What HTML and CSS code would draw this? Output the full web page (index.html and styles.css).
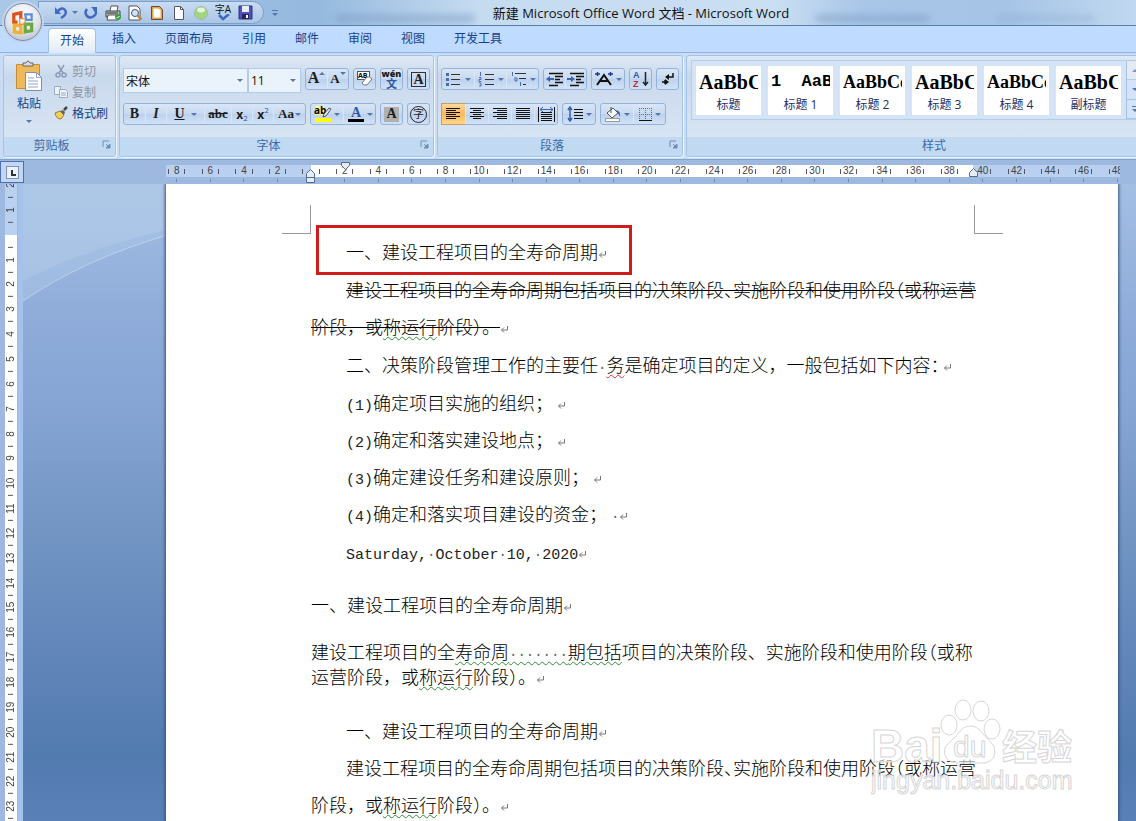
FILE: index.html
```html
<!DOCTYPE html>
<html lang="zh-CN">
<head>
    <meta charset="UTF-8">
    <title>新建 Microsoft Office Word 文档 - Microsoft Word</title>
    <link rel="stylesheet" href="styles.css">
</head>

<body>
<svg class="defs" aria-hidden="true">
    <symbol id="mark" viewBox="0 0 9 9"><path d="M7.5 1v4H1.5M4 2.5L1.5 5L4 7.5" fill="none" stroke="#777"/></symbol>
    <symbol id="launcher" viewBox="0 0 9 9"><path d="M1 7V1H7" fill="none" stroke="#6e8fb5"/><path d="M4 4l3 3M8 4v4H4z" fill="#6e8fb5" stroke="#6e8fb5"/></symbol>
</svg>

<div class="window">
    <header class="titlebar">
        <div class="quick">
            <button class="quick__btn" aria-label="撤销"><svg width="16" height="16" viewBox="0 0 16 16"><path d="M4 7Q9 1 12 5T8 13" fill="none" stroke="#4169c4" stroke-width="2.500"/><path d="M2 2v7h6z" fill="#4169c4"/></svg></button>
            <i class="caret quick__caret"></i>
            <button class="quick__btn" aria-label="重复"><svg width="16" height="16" viewBox="0 0 16 16"><path d="M4 4Q1 8 4 11T11 11T11 4" fill="none" stroke="#4169c4" stroke-width="2.500"/><path d="M8 2h6v6z" fill="#4169c4"/></svg></button>
            <button class="quick__btn" aria-label="快速打印"><svg width="17" height="16" viewBox="0 0 17 16"><path d="M5 6l1-5h7l-1 5" fill="#fff" stroke="#555"/><path d="M1 6h14v6H1z" fill="#b9bcc0" stroke="#444"/><path d="M3 10h10v5H2z" fill="#fff" stroke="#555"/><path d="M2 8h11" stroke="#333"/><circle cx="13" cy="12" r="3" fill="#37a13a"/><path d="M11.500 12l1 1 2-2" fill="none" stroke="#fff"/></svg></button>
            <button class="quick__btn" aria-label="打印预览"><svg width="16" height="16" viewBox="0 0 16 16"><path d="M2 1h8l3 3v11H2z" fill="#fff" stroke="#556"/><circle cx="8" cy="8" r="3.500" fill="#cfe4fa" stroke="#456"/><path d="M10.500 10.500l4 4" stroke="#b98a4a" stroke-width="2.500"/></svg></button>
            <button class="quick__btn" aria-label="页面"><svg width="14" height="16" viewBox="0 0 14 16"><path d="M1.500 1.500h8l3 3v10h-11z" fill="#e9a24c" stroke="#6a4a2a"/><path d="M3.500 3.500h5l2 2v7h-7z" fill="#fff"/></svg></button>
            <button class="quick__btn" aria-label="新建"><svg width="14" height="16" viewBox="0 0 14 16"><path d="M2.500 1.500h6l3 3v10h-9z" fill="#fff" stroke="#556"/><path d="M8.500 1.500v3h3" fill="none" stroke="#556"/></svg></button>
            <button class="quick__btn" aria-label="圆形"><svg width="16" height="16" viewBox="0 0 16 16"><circle cx="8" cy="8" r="6.500" fill="#9fd67f" stroke="#a9b4b4"/><ellipse cx="8" cy="5" rx="4" ry="2.500" fill="#e4f6d5"/></svg></button>
            <button class="quick__btn quick__spell" aria-label="拼写"><span>字A</span><svg width="14" height="8" viewBox="0 0 14 8"><path d="M3 1l4 4 6-5" fill="none" stroke="#3f69bd" stroke-width="2.500"/></svg></button>
            <button class="quick__btn" aria-label="保存"><svg width="15" height="15" viewBox="0 0 15 15"><path d="M1 1h13v13H1z" fill="#5350c0" stroke="#302f80"/><path d="M4 1h7v6H4z" fill="#e8eefa"/><path d="M4 9h7v5H4z" fill="#24245e"/><path d="M8 10h2v3H8z" fill="#fff"/></svg></button>
        </div>
        <button class="quick__more" aria-label="自定义"><i class="bar"></i><i class="caret"></i></button>
        <h1 class="title">新建 Microsoft Office Word 文档 - Microsoft Word</h1>
        <i class="haze haze--a"></i><i class="haze haze--b"></i><i class="haze haze--c"></i>
    </header>

    <button class="orb" aria-label="Office 按钮">
        <svg width="26" height="26" viewBox="0 0 24 24" fill="none" stroke-width="3">
            <path d="M10 9V3.500L3.500 5v7H7" stroke="#d9541e"/>
            <path d="M14 5h6v5h-5z" stroke="#5a8fd8" stroke-width="2"/>
            <path d="M4 15v6l6 1v-7z" stroke="#f1b12f"/>
            <path d="M14 14h6v6l-6 1z" stroke="#6aa842"/>
            <path d="M9 9h5v5H9z" stroke="#e8863a" stroke-width="1"/>
        </svg>
    </button>

    <nav class="tabs">
        <a href="#" class="tab tab--active">开始</a>
        <a href="#" class="tab">插入</a>
        <a href="#" class="tab">页面布局</a>
        <a href="#" class="tab">引用</a>
        <a href="#" class="tab">邮件</a>
        <a href="#" class="tab">审阅</a>
        <a href="#" class="tab">视图</a>
        <a href="#" class="tab">开发工具</a>
    </nav>

    <div class="ribbon">
        <section class="group">
            <div class="group__body clipboard">
                <button class="paste">
                    <svg width="28" height="32" viewBox="0 0 28 32">
                        <path d="M1.500 4.500h23v24h-23z" fill="#edb95c" stroke="#c78d35"/>
                        <path d="M8 6V3h3q2-4 4 0h3v3z" fill="#d9dce2" stroke="#666"/>
                        <path d="M10.500 12.500h11l5 5v13h-16z" fill="#fff" stroke="#7b8fb3"/>
                        <path d="M21.500 12.500v5h5M13 18h6M13 21h10M13 24h10M13 27h10" fill="none" stroke="#93a6cb"/>
                    </svg>
                    <span>粘贴</span>
                    <i class="caret"></i>
                </button>
                <div class="clipboard__list">
                    <button class="clip clip--off"><svg width="14" height="14" viewBox="0 0 14 14"><path d="M4 1l5 8M10 1L5 9" stroke="#8a9bb3" stroke-width="1.500"/><circle cx="4" cy="11" r="2" fill="none" stroke="#8a9bb3" stroke-width="1.500"/><circle cx="10" cy="11" r="2" fill="none" stroke="#8a9bb3" stroke-width="1.500"/></svg>剪切</button>
                    <button class="clip clip--off"><svg width="14" height="14" viewBox="0 0 14 14"><path d="M.5 1.500h6v8h-6z" fill="#eef3fa" stroke="#9aabc4"/><path d="M5.500 4.500h6l2 2v6h-8zM7 8h5M7 10h5" fill="#eef3fa" stroke="#9aabc4"/></svg>复制</button>
                    <button class="clip"><svg width="14" height="14" viewBox="0 0 14 14"><path d="M1 7l5-2 4 4-3 4q-5 0-6-6z" fill="#f0cf5e" stroke="#a87b28"/><path d="M6 5l4 4 1-3-2-2z" fill="#666"/><path d="M10 4l3-3" stroke="#444" stroke-width="2.500"/></svg>格式刷</button>
                </div>
            </div>
            <footer class="group__label">剪贴板<svg class="launcher"><use href="#launcher"/></svg></footer>
        </section>

        <section class="group">
            <div class="group__body tools">
                <div class="row">
                    <div class="combos">
                        <label class="combo combo--font"><input type="text" value="宋体" aria-label="字体"><i class="caret"></i></label>
                        <label class="combo combo--size"><input type="text" value="11" aria-label="字号"><i class="caret"></i></label>
                    </div>
                    <div class="set">
                        <button class="tool serif grow">A<i class="up"></i></button>
                        <button class="tool serif shrink">A<i class="caret"></i></button>
                    </div>
                    <div class="set"><button class="tool" aria-label="清除格式"><svg width="18" height="18" viewBox="0 0 18 18"><rect x="1.500" y="1.500" width="12" height="8" fill="#fff" stroke="#555"/><text x="2" y="8" class="tiny">AB</text><path d="M6 13l5-6q3-1 5 2l-5 6q-4 1-5-2z" fill="#fff" stroke="#777"/></svg></button></div>
                    <div class="set"><button class="tool wen"><b>wén</b><span>文</span></button></div>
                    <div class="set"><button class="tool serif"><span class="boxed">A</span></button></div>
                </div>
                <div class="row">
                    <div class="set">
                        <button class="tool serif">B</button>
                        <button class="tool serif"><i>I</i></button>
                        <button class="tool tool--u serif"><u>U</u><i class="caret"></i></button>
                        <button class="tool tool--abc serif"><s>abc</s></button>
                        <button class="tool">x<sub>2</sub></button>
                        <button class="tool">x<sup>2</sup></button>
                        <button class="tool tool--case serif">Aa<i class="caret"></i></button>
                    </div>
                    <div class="set">
                        <button class="tool tool--wide" aria-label="突出显示"><svg width="18" height="18" viewBox="0 0 18 18"><path d="M1 13h16v4H1z" fill="#ffff00"/><path d="M1 1h9v9H1z" fill="#fff68a"/><text x="0" y="9" class="ab">ab</text><path d="M9 12l1-3 5-6 2 1-5 7z" fill="#dce8fa" stroke="#556"/></svg><i class="caret"></i></button>
                        <button class="tool tool--wide" aria-label="字体颜色"><svg width="18" height="18" viewBox="0 0 18 18"><path d="M1 14h16v3H1z" fill="#000"/><text x="4" y="12" class="cap">A</text></svg><i class="caret"></i></button>
                    </div>
                    <div class="set"><button class="tool serif"><span class="shaded">A</span></button></div>
                    <div class="set"><button class="tool"><span class="ring">字</span></button></div>
                </div>
            </div>
            <footer class="group__label">字体<svg class="launcher"><use href="#launcher"/></svg></footer>
        </section>

        <section class="group">
            <div class="group__body tools">
                <div class="row">
                    <div class="set">
                        <button class="tool tool--wide" aria-label="项目符号"><svg width="18" height="16" viewBox="0 0 18 16"><path d="M6 3.500h9M6 8.500h9M6 13.500h9" stroke="#333"/><path d="M1 2h3v3H1zM1 7h3v3H1zM1 12h3v3H1z" fill="#4a6ea9"/></svg><i class="caret"></i></button>
                        <button class="tool tool--wide" aria-label="编号"><svg width="18" height="16" viewBox="0 0 18 16"><path d="M7 3.500h9M7 8.500h9M7 13.500h9" stroke="#333"/><path d="M2.500 1v4M1 6.500h2v2H1v2h2M1 12h2v3H1" fill="none" stroke="#4a6ea9"/></svg><i class="caret"></i></button>
                        <button class="tool tool--wide" aria-label="多级列表"><svg width="18" height="16" viewBox="0 0 18 16"><path d="M5 2.500h11M9 7.500h7M13 13.500h3" stroke="#333"/><path d="M2.500 1v4M4 7h3v3H5V8M10.500 11v4" fill="none" stroke="#4a6ea9"/></svg><i class="caret"></i></button>
                    </div>
                    <div class="set">
                        <button class="tool" aria-label="减少缩进"><svg width="18" height="16" viewBox="0 0 18 16"><path d="M3 2.500h14M9 5.500h8M9 8.500h5M9 11.500h8M3 14.500h9" stroke="#111" stroke-width="1.500"/><path d="M0 8l4-3v2h4v2H4v2z" fill="#3c62ae"/></svg></button>
                        <button class="tool" aria-label="增加缩进"><svg width="18" height="16" viewBox="0 0 18 16"><path d="M3 2.500h14M9 5.500h8M9 8.500h5M9 11.500h8M3 14.500h9" stroke="#111" stroke-width="1.500"/><path d="M8 8L4 5v2H0v2h4v2z" fill="#3c62ae"/></svg></button>
                    </div>
                    <div class="set"><button class="tool tool--wide" aria-label="中文版式"><svg width="20" height="16" viewBox="0 0 20 16"><path d="M3 14L10 4l7 10M6 10h8" fill="none" stroke="#111" stroke-width="2"/><path d="M1 3h5M3.500 1v4M14 3h5M16.500 1v4" stroke="#22349c" stroke-width="1.500"/></svg><i class="caret"></i></button></div>
                    <div class="set"><button class="tool" aria-label="排序"><svg width="18" height="18" viewBox="0 0 18 18"><text x="1" y="8" class="sort sort--a">A</text><text x="1" y="17" class="sort sort--z">Z</text><path d="M13.500 2v12M11 12l2.500 3 2.500-3" fill="none" stroke="#222" stroke-width="1.500"/></svg></button></div>
                    <div class="set"><button class="tool" aria-label="显示标记"><svg width="16" height="16" viewBox="0 0 16 16"><path d="M13 2v4H7M5 9v4M2 11h6" fill="none" stroke="#111" stroke-width="1.500"/><path d="M9 3v6L5 6zM5 8l4 3-4 3z" fill="#111"/></svg></button></div>
                </div>
                <div class="row">
                    <div class="set set--align">
                        <button class="tool tool--on" aria-label="左对齐"><svg width="15" height="14" viewBox="0 0 15 14"><path d="M0 1.500h14M0 3.500h10M0 5.500h14M0 7.500h10M0 9.500h14M0 11.500h10" stroke="#111"/></svg></button>
                        <button class="tool" aria-label="居中"><svg width="15" height="14" viewBox="0 0 15 14"><path d="M0 1.500h14M3 3.500h8M0 5.500h14M3 7.500h8M0 9.500h14M3 11.500h8" stroke="#111"/></svg></button>
                        <button class="tool" aria-label="右对齐"><svg width="15" height="14" viewBox="0 0 15 14"><path d="M0 1.500h14M4 3.500h10M0 5.500h14M4 7.500h10M0 9.500h14M4 11.500h10" stroke="#111"/></svg></button>
                        <button class="tool" aria-label="两端对齐"><svg width="15" height="14" viewBox="0 0 15 14"><path d="M0 1.500h14M0 3.500h14M0 5.500h14M0 7.500h14M0 9.500h14M0 11.500h14" stroke="#111"/></svg></button>
                        <button class="tool" aria-label="分散对齐"><svg width="17" height="17" viewBox="0 0 17 17"><path d="M3 6.500h11M3 8.500h11M3 10.500h11M3 12.500h11M3 14.500h11M.5 1v15M16.500 1v15" stroke="#111"/><path d="M2 3.500h13M5 1L2 3.500 5 6M12 1l3 2.500L12 6" fill="none" stroke="#3c62ae"/></svg></button>
                    </div>
                    <div class="set"><button class="tool tool--wide" aria-label="行距"><svg width="17" height="16" viewBox="0 0 17 16"><path d="M7 3.500h9M7 6.500h9M7 9.500h9M7 12.500h9" stroke="#111"/><path d="M3 1v14M1 4l2-3 2 3M1 12l2 3 2-3" fill="none" stroke="#3c62ae" stroke-width="1.500"/></svg><i class="caret"></i></button></div>
                    <div class="set">
                        <button class="tool tool--wide" aria-label="底纹"><svg width="18" height="17" viewBox="0 0 18 17"><path d="M3 7l6-5 5 5-6 5z" fill="#f4f7fb" stroke="#555"/><path d="M7 1v6" stroke="#555"/><path d="M12 4q5 1 4 7l-2-4z" fill="#3c62ae"/><path d="M1.500 12.500h14v3h-14z" fill="#fff" stroke="#999"/></svg><i class="caret"></i></button>
                        <button class="tool tool--wide" aria-label="边框"><svg width="15" height="15" viewBox="0 0 15 15"><path d="M1.500 1v12M7.500 1v12M13.500 1v12M1 1.500h13M1 7.500h13" stroke="#667" stroke-dasharray="1 1"/><path d="M1 13.500h13" stroke="#111" stroke-width="1"/></svg><i class="caret"></i></button>
                    </div>
                </div>
            </div>
            <footer class="group__label">段落<svg class="launcher"><use href="#launcher"/></svg></footer>
        </section>

        <section class="group group--styles">
            <div class="group__body">
                <div class="gallery">
                    <div class="gallery__items">
                        <button class="style"><b>AaBbCc</b><span>标题</span></button>
                        <button class="style"><b class="style__mono">1&nbsp; AaBb</b><span>标题 1</span></button>
                        <button class="style"><b class="style__small">AaBbCc</b><span>标题 2</span></button>
                        <button class="style"><b>AaBbCc</b><span>标题 3</span></button>
                        <button class="style"><b class="style__small">AaBbCc</b><span>标题 4</span></button>
                        <button class="style"><b>AaBbCc</b><span>副标题</span></button>
                    </div>
                    <div class="gallery__scroll">
                        <button class="gallery__off" aria-label="上一行"><i class="up"></i></button>
                        <button aria-label="下一行"><i class="caret"></i></button>
                        <button aria-label="更多"><i class="bar"></i><i class="caret"></i></button>
                    </div>
                </div>
            </div>
            <footer class="group__label">样式</footer>
        </section>
    </div>

    <div class="ruler">
        <button class="corner" aria-label="制表符"><span></span></button>
        <div class="ruler__track">
            <div class="ruler__white"></div>
            <div class="ruler__cells">
                <span>8</span><span>6</span><span>4</span><span>2</span><span></span><span>2</span><span>4</span><span>6</span><span>8</span><span>10</span><span>12</span><span>14</span><span>16</span><span>18</span><span>20</span><span>22</span><span>24</span><span>26</span><span>28</span><span>30</span><span>32</span><span>34</span><span>36</span><span>38</span><span>40</span><span>42</span><span>44</span><span>46</span><span>48</span>
            </div>
            <svg class="stop stop--left" width="9" height="14" viewBox="0 0 9 14"><path d="M.5 8.500v-4l4-4 4 4v4zM.5 8.500h8v5h-8z" fill="#e6ecf5" stroke="#556c8e"/></svg>
            <svg class="stop stop--first" width="9" height="8" viewBox="0 0 9 8"><path d="M.5.5h8v3l-4 4-4-4z" fill="#e6ecf5" stroke="#556c8e"/></svg>
            <svg class="stop stop--right" width="9" height="9" viewBox="0 0 9 9"><path d="M.5 8.500v-4l4-4 4 4v4z" fill="#e6ecf5" stroke="#556c8e"/></svg>
        </div>
    </div>

    <main class="workspace">
        <div class="vruler">
            <div class="vruler__cells">
                <span>2</span><span>1</span><span></span><span>1</span><span>2</span><span>3</span><span>4</span><span>5</span><span>6</span><span>7</span><span>8</span><span>9</span><span>10</span><span>11</span><span>12</span><span>13</span><span>14</span><span>15</span><span>16</span><span>17</span><span>18</span><span>19</span><span>20</span><span>21</span><span>22</span><span>23</span><span>24</span>
            </div>
        </div>
        <div class="desk">
            <svg class="wave" viewBox="0 0 144 160" preserveAspectRatio="none">
                <path d="M0 0h144v46Q60 66 0 97z" fill="#b3cdea" opacity=".65"/>
                <path d="M0 97Q60 66 144 46v6Q60 76 0 117z" fill="#a9c4e6" opacity=".55"/>
                <path d="M0 117Q60 76 144 51" fill="none" stroke="#b9d0ee" stroke-width="1"/>
            </svg>
            <article class="page">
                <i class="crop crop--left"></i><i class="crop crop--right"></i>
                <div class="callout"></div>

                <p class="para para--indent">一、建设工程项目的全寿命周期<svg class="mark"><use href="#mark"/></svg></p>
                <p class="para para--indent"><s>建设工程项目的全寿命周期包括项目的决策阶段<span class="half">、</span>实施阶段和使用阶段<span class="half">（</span>或称运营<br>阶段，或<span class="wavy">称运行</span>阶段<span class="half">）</span>。</s><svg class="mark"><use href="#mark"/></svg></p>
                <p class="para para--indent">二、决策阶段管理工作的主要任<span class="dot">·</span><span class="wavy wavy--red">务</span>是确定项目的定义，一般包括如下内容<span class="half">：</span> <svg class="mark"><use href="#mark"/></svg></p>
                <div class="list">
                    <p><span class="latin">(1)</span>确定项目实施的组织； <svg class="mark"><use href="#mark"/></svg></p>
                    <p><span class="latin">(2)</span>确定和落实建设地点； <svg class="mark"><use href="#mark"/></svg></p>
                    <p><span class="latin">(3)</span>确定建设任务和建设原则； <svg class="mark"><use href="#mark"/></svg></p>
                    <p><span class="latin">(4)</span>确定和落实项目建设的资金； <span class="dot">·</span><svg class="mark"><use href="#mark"/></svg></p>
                </div>
                <p class="para para--indent"><span class="latin">Saturday,<span class="dot">·</span>October<span class="dot">·</span>10,<span class="dot">·</span>2020</span><svg class="mark"><use href="#mark"/></svg></p>

                <p class="para para--tight">一、建设工程项目的全寿命周期<svg class="mark"><use href="#mark"/></svg></p>
                <p class="para para--tight">建设工程项目的全<span class="wavy">寿命周<span class="dot">·······</span>期包括</span>项目的决策阶段、实施阶段和使用阶段<span class="half">（</span>或称<br>运营阶段，或<span class="wavy">称运行</span>阶段）。<svg class="mark"><use href="#mark"/></svg></p>

                <p class="para para--indent para--after">一、建设工程项目的全寿命周期<svg class="mark"><use href="#mark"/></svg></p>
                <p class="para para--indent">建设工程项目的全寿命周期包括项目的决策阶段<span class="half">、</span>实施阶段和使用阶段<span class="half">（</span>或称运营<br>阶段，或<span class="wavy">称运行</span>阶段<span class="half">）</span>。<svg class="mark"><use href="#mark"/></svg></p>

                <svg class="watermark" width="208" height="108" viewBox="0 0 208 108">
                    <g fill="#fff" fill-opacity=".6" stroke="#d6d6d6" stroke-width="1">
                        <text x="0" y="70" class="wm wm--bai">Bai</text>
                        <ellipse cx="78" cy="33" rx="8" ry="10"/>
                        <ellipse cx="92" cy="18" rx="8" ry="10"/>
                        <ellipse cx="110" cy="19" rx="8" ry="10"/>
                        <ellipse cx="121" cy="37" rx="8" ry="10"/>
                        <path d="M99 34q8 0 13 8l11 12q4 14-9 17H85q-14-2-11-16l13-13q5-8 12-8z"/>
                        <text x="82" y="65" class="wm wm--du">du</text>
                        <text x="131" y="68" class="wm wm--cn">经验</text>
                        <text x="0" y="97" class="wm wm--url">jingyan.baidu.com</text>
                    </g>
                </svg>
            </article>
        </div>
    </main>
</div>
</body>
</html>
```
FILE: styles.css
```css
* {
    box-sizing: border-box;
}

html, body {
    margin: 0;
    padding: 0;
    height: 100%;
    overflow: hidden;
}

body {
    font-family: "Open Sans", "Noto Sans CJK SC", sans-serif;
    font-size: 12px;
    color: #15428b;
}

button {
    margin: 0;
    padding: 0;
    border: 0;
    background: none;
    font: inherit;
    color: inherit;
}

.defs {
    position: absolute;
    width: 0;
    height: 0;
}

.window {
    position: relative;
    display: flex;
    flex-direction: column;
    height: 100vh;
    background: #9db9e0;
}

.caret, .up {
    flex: none;
    border: 3px solid transparent;
    border-top-color: #5577aa;
    border-bottom: 0;
}

.up {
    border-top: 0;
    border-bottom: 3px solid #5577aa;
}

.bar {
    width: 6px;
    height: 1px;
    background: #5577aa;
}

/* title bar */
.titlebar {
    position: relative;
    display: flex;
    align-items: center;
    flex: none;
    height: 26px;
    padding-left: 38px;
    border-bottom: 1px solid #5b7ea8;
    background: linear-gradient(90deg, #a9c8e6, #95b9df 28%, #c5dbf0 42%, #cbdff3 68%, #a8c6e8 76%, #a5c4e6 88%, #c0d8f0);
    overflow: hidden;
}

.quick {
    display: flex;
    align-items: center;
    width: 226px;
    height: 23px;
    padding-left: 11px;
    border: 1px solid #7e9cc4;
    border-radius: 0 12px 12px 0;
    background: linear-gradient(#c8dcf2, #aac6e6);
}

.quick__btn {
    display: flex;
    justify-content: center;
    align-items: center;
    width: 22px;
    height: 20px;
}

.quick__caret {
    margin: 0 2px 0 0;
}

.quick__spell {
    flex-direction: column;
    font-size: 10px;
    line-height: 10px;
    color: #111;
}

.quick__more {
    display: flex;
    flex-direction: column;
    align-items: center;
    gap: 2px;
    margin-left: 8px;
}

.title {
    position: absolute;
    left: 0;
    right: 0;
    margin: 0;
    padding-left: 146px;
    text-align: center;
    font-size: 13px;
    line-height: 26px;
    font-weight: normal;
    color: #111;
}

.haze {
    position: absolute;
    top: 14px;
    height: 9px;
    border-radius: 5px;
    background: #7f9fc4;
    opacity: 0.5;
    filter: blur(3px);
}

.haze--a {
    left: 335px;
    width: 140px;
}

.haze--b {
    left: 815px;
    width: 115px;
}

.haze--c {
    right: 40px;
    width: 100px;
    opacity: 0.25;
}

.orb {
    position: absolute;
    top: 3px;
    left: 4px;
    z-index: 2;
    display: flex;
    justify-content: center;
    align-items: center;
    width: 38px;
    height: 38px;
    border: 1px solid #7d8da6;
    border-radius: 50%;
    background: radial-gradient(circle at 50% 30%, #fff, #dfe3ea 55%, #aab4c4);
    box-shadow: 0 0 0 2px #c3d5ec;
}

/* tabs */
.tabs {
    display: flex;
    align-items: flex-end;
    gap: 1px;
    flex: none;
    height: 27px;
    padding-left: 48px;
    background: #bfdbff;
    border-bottom: 1px solid #8db2e3;
}

.tab {
    height: 25px;
    padding: 0 14px;
    line-height: 24px;
    color: #15428b;
    text-decoration: none;
}

.tab--active {
    margin: 0 1px -1px 0;
    border: 1px solid #9fc0ea;
    border-bottom: 0;
    border-radius: 4px 4px 0 0;
    padding: 0 11px;
    background: linear-gradient(#fff, #e0ebf8);
}

/* ribbon */
.ribbon {
    display: flex;
    gap: 3px;
    flex: none;
    padding: 2px 3px;
    background: #c9dcf3;
    border-bottom: 1px solid #7fa5cb;
    overflow: hidden;
}

.group {
    display: flex;
    flex-direction: column;
    flex: none;
    border: 1px solid #a6c5e6;
    border-radius: 3px;
    background: linear-gradient(#dfe9f5, #c9d9ed 20%, #dce8f5);
    box-shadow: 1px 1px 0 #eef6ff;
    overflow: hidden;
}

.group--styles {
    width: 496px;
}

.group__body {
    height: 81px;
}

.group__label {
    position: relative;
    height: 19px;
    line-height: 18px;
    background: #c1d9f1;
    text-align: center;
    color: #3e6aaa;
}

.group:first-child .group__label, .group:nth-child(2) .group__label, .group:nth-child(3) .group__label {
    padding-right: 16px;
}

.launcher {
    position: absolute;
    right: 4px;
    top: 3px;
    width: 9px;
    height: 9px;
}

.clipboard {
    display: flex;
    width: 111px;
    padding: 4px 0 0 2px;
}

.paste {
    display: flex;
    flex-direction: column;
    align-items: center;
    width: 46px;
}

.paste span {
    line-height: 24px;
}

.paste .caret {
    margin-top: 4px;
}

.clipboard__list {
    display: flex;
    flex-direction: column;
}

.clip {
    display: flex;
    align-items: center;
    gap: 4px;
    height: 21px;
    margin-left: 2px;
    white-space: nowrap;
}

.clip--off {
    color: #8f959e;
}

.tools {
    display: flex;
    flex-direction: column;
    gap: 10px;
    padding: 12px 3px 0;
}

.row {
    display: flex;
    align-items: flex-start;
    gap: 4px;
    height: 25px;
}

.row:last-child {
    height: 22px;
}

.combos {
    display: flex;
}

.combo {
    display: flex;
    align-items: center;
    height: 25px;
    padding-right: 4px;
    border: 1px solid #b0cbec;
    background: #eaf2fb;
}

.combo--font {
    width: 125px;
}

.combo--size {
    width: 53px;
}

.combo input {
    flex: 1;
    min-width: 0;
    padding: 0 2px;
    border: 0;
    outline: 0;
    background: none;
    font: inherit;
    color: #111;
}

.set {
    display: flex;
    height: 22px;
    border: 1px solid #93b3dc;
    border-radius: 3px;
    background: linear-gradient(#d9e6f6, #c7d9f0 50%, #bcd1ee 51%, #d2e2f6);
}

.tool {
    display: flex;
    justify-content: center;
    align-items: center;
    gap: 2px;
    width: 21px;
    height: 20px;
    font-weight: bold;
    color: #1c1c1c;
}

.tool + .tool {
    border-left: 1px solid #d9e6f7;
}

.tool svg {
    flex: none;
}

.tool--wide {
    width: 32px;
}

.set--align .tool {
    width: 23px;
}

.tool--u {
    width: 38px;
    gap: 6px;
}

.tool--abc {
    width: 27px;
}

.tool--case {
    width: 32px;
    gap: 1px;
}

.tool--on {
    background: linear-gradient(#fbd9a0, #f9b65c 50%, #fdd98c);
    box-shadow: 0 0 0 1px #c2a066;
}

.serif {
    font-family: "Liberation Serif", serif;
    font-size: 14px;
}

.tool--abc, .tool--case {
    font-size: 13px;
}

.tool sub, .tool sup {
    margin-left: -2px;
    font-size: 8px;
    line-height: 8px;
    font-weight: normal;
    color: #2f57a8;
}

.tool sub {
    margin-top: 8px;
}

.tool sup {
    margin-top: -8px;
}

.grow {
    align-items: flex-start;
    gap: 0;
    font-size: 16px;
}

.shrink {
    align-items: flex-start;
    gap: 0;
    line-height: 20px;
    font-size: 13px;
}

.grow .up, .shrink .caret {
    margin-top: 3px;
}

.wen {
    flex-direction: column;
    gap: 0;
    font-size: 9px;
    line-height: 8px;
}

.wen span {
    font-size: 11px;
    line-height: 11px;
    color: #2f57a8;
}

.boxed, .shaded {
    width: 15px;
    height: 15px;
    border: 1px solid #333;
    line-height: 14px;
}

.shaded {
    border: 0;
    background: #b0b0b0;
}

.ring {
    width: 17px;
    height: 17px;
    border: 1px solid #222;
    border-radius: 50%;
    font-size: 11px;
    line-height: 14px;
    font-weight: normal;
}

.tiny {
    font: bold 7px "Open Sans", sans-serif;
}

.ab {
    font: bold 10px "Open Sans", sans-serif;
}

.cap {
    font: bold 14px "Liberation Serif", serif;
    fill: #2f57a8;
}

.sort {
    font: bold 9px "Liberation Sans", sans-serif;
}

.sort--a {
    fill: #2f57a8;
}

.sort--z {
    fill: #b03030;
}

.gallery {
    display: flex;
    margin: 4px;
    height: 60px;
    border: 1px solid #b5cdea;
    background: #d5e3f6;
    overflow: hidden;
}

.gallery__items {
    display: flex;
    gap: 7px;
    flex: none;
    padding: 5px 5px 0 4px;
}

.style {
    width: 65px;
    height: 49px;
    padding: 4px 3px 0;
    background: #fff;
    text-align: center;
}

.style b {
    display: block;
    overflow: hidden;
    white-space: nowrap;
    text-align: left;
    font-family: "Liberation Serif", serif;
    font-size: 20px;
    line-height: 24px;
    color: #000;
}

.style .style__small {
    font-size: 18px;
}

.style .style__mono {
    font-family: "Liberation Mono", monospace;
    font-size: 17px;
}

.style span {
    line-height: 22px;
    color: #1e2f66;
}

.gallery__scroll {
    display: flex;
    flex-direction: column;
    width: 16px;
    border-left: 1px solid #a6c3e6;
}

.gallery__scroll button {
    display: flex;
    flex-direction: column;
    justify-content: center;
    align-items: center;
    gap: 2px;
    flex: 1;
    border-bottom: 1px solid #a6c3e6;
}

.gallery__off {
    background: #eceef1;
    opacity: 0.7;
}

/* horizontal ruler */
.ruler {
    display: flex;
    flex: none;
    height: 24px;
    padding-top: 1px;
}

.corner {
    display: flex;
    justify-content: center;
    align-items: center;
    width: 24px;
    height: 22px;
    border: 1px solid #4c6fb1;
    background: #c4d7f2;
}

.corner span {
    width: 13px;
    height: 13px;
    border: 1px solid #7b94bd;
    background: linear-gradient(#333, #333) 4px 3px / 2px 6px no-repeat, linear-gradient(#333, #333) 4px 7px / 5px 2px no-repeat, #edf3fc;
}

.ruler__track {
    position: relative;
    flex: none;
    width: 954px;
    height: 18px;
    margin: 4px 0 0 142px;
    background: linear-gradient(#b9d0f0, #b9d0f0) 0 0 / 100% 12px no-repeat;
}

.ruler__white {
    width: 662px;
    height: 12px;
    margin-left: 145px;
    background: #fff;
}

.ruler__cells {
    position: absolute;
    inset: 0;
    display: grid;
    grid-template-columns: repeat(29, 1fr);
    margin: 0 -14px 0 -6px;
    clip-path: inset(0 14px 0 6px);
}

.ruler__cells span {
    background: linear-gradient(#556, #556) 25% 4px / 1px 5px no-repeat, linear-gradient(#556, #556) 75% 4px / 1px 5px no-repeat, linear-gradient(#7288a8, #7288a8) 50% 14px / 1px 3px no-repeat;
    text-align: center;
    font: 10px/12px "Liberation Sans", sans-serif;
    color: #444;
}

.stop {
    position: absolute;
}

.stop--left {
    left: 140px;
    top: 4px;
}

.stop--first {
    left: 175px;
    top: -3px;
}

.stop--right {
    left: 803px;
    top: 3px;
}

/* document area */
.workspace {
    display: flex;
    flex: 1;
    min-height: 0;
}

.vruler {
    flex: none;
    width: 23px;
    padding-left: 5px;
    border-right: 5px solid #a4c2ea;
    background: #9db9e0;
    overflow: hidden;
}

.vruler__cells {
    display: grid;
    grid-template-rows: repeat(27, 1fr);
    height: 671px;
    margin-top: -11px;
    width: 12px;
    background: linear-gradient(#b9d0f0 62px, #fff 62px);
}

.vruler__cells span {
    background: linear-gradient(#556, #556) 4px 0 / 5px 1px no-repeat;
    writing-mode: vertical-rl;
    transform: rotate(180deg);
    text-align: center;
    font: 10px/12px "Liberation Sans", sans-serif;
    color: #444;
}

.desk {
    position: relative;
    flex: 1;
    min-width: 0;
    background: linear-gradient(#a3bfe4, #8eabd9 22%, #86a5d4 35%, #6d91c0 60%, #6387bb 72%, #527bb0 90%, #5a80b8);
    overflow: hidden;
}

.wave {
    position: absolute;
    left: 0;
    top: 0;
    width: 144px;
    height: 160px;
}

.page {
    position: relative;
    width: 952px;
    min-height: 100%;
    margin-left: 143px;
    padding: 49px 140px 0 145px;
    background: #fff;
    box-shadow: 0 0 3px 1px #34507c;
    font-family: "Noto Sans CJK SC", sans-serif;
    font-weight: 300;
    font-size: 18px;
    line-height: 37px;
    color: #000;
    white-space: nowrap;
}

.crop {
    position: absolute;
    top: 21px;
    width: 29px;
    height: 29px;
    border-bottom: 1px solid #999;
}

.crop--left {
    left: 116px;
    border-right: 1px solid #999;
}

.crop--right {
    left: 808px;
    border-left: 1px solid #999;
}

.callout {
    position: absolute;
    left: 150px;
    top: 41px;
    width: 316px;
    height: 50px;
    border: 3px solid #d01c1c;
}

.page p {
    margin: 0;
}

.page .para {
    margin-bottom: 1px;
}

.para--indent {
    text-indent: 35px;
}

.list {
    margin-bottom: 1px;
    padding-left: 35px;
}

.page .para--tight {
    margin: 22px 0;
    line-height: 25px;
}

.page .para--after {
    margin: 23px 0 0;
}

.latin {
    font-family: "Liberation Mono", monospace;
    font-size: 15px;
    line-height: 1;
    color: #222;
}

.dot {
    font-family: "Liberation Mono", monospace;
    font-size: 14px;
    line-height: 1;
    color: #666;
}

.half {
    font-feature-settings: "halt";
}

.page s {
    text-decoration-thickness: 1px;
}

.wavy {
    text-decoration: underline wavy #2e8b3a 1px;
    text-underline-offset: 2px;
}

.wavy--red {
    text-decoration-color: #d03030;
}

.mark {
    width: 9px;
    height: 9px;
}

.watermark {
    position: absolute;
    left: 705px;
    top: 508px;
}

.wm {
    font-family: "Liberation Sans", "Noto Sans CJK SC", sans-serif;
}

.wm--bai {
    font-size: 46px;
    font-weight: bold;
}

.wm--du {
    font-size: 30px;
}

.wm--cn {
    font-size: 35px;
    font-weight: bold;
}

.wm--url {
    font-size: 25px;
}
```
